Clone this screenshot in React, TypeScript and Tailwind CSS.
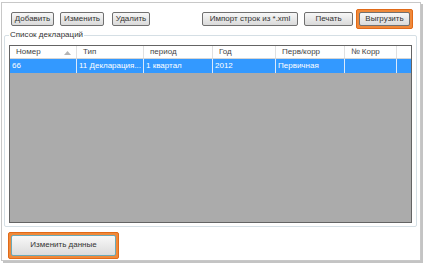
const Btn = ({
  label,
  className = '',
  highlight = false,
}: {
  label: string;
  className?: string;
  highlight?: boolean;
}) => (
  <div
    className={
      highlight
        ? 'p-[2px] bg-[#f0893a] rounded-[2px] border border-[#e06a18]'
        : ''
    }
  >
    <div
      className={`h-[14px] flex items-center justify-center border border-[#707070] rounded-[2px] bg-gradient-to-b from-[#f7f7f7] to-[#dadada] text-[8px] text-[#333] whitespace-nowrap ${className}`}
    >
      {label}
    </div>
  </div>
);

const columns = [
  { name: 'Номер', w: 'w-[67px]' },
  { name: 'Тип', w: 'w-[67px]' },
  { name: 'период', w: 'w-[69px]' },
  { name: 'Год', w: 'w-[63px]' },
  { name: 'Перв/корр', w: 'w-[69px]' },
  { name: '№ Корр', w: 'w-[52px]' },
];

const row = ['66', '11 Декларация...', '1 квартал', '2012', 'Первичная', ''];

export default function App() {
  return (
    <div
      className="w-[424px] h-[264px] bg-white pl-[1px] pt-[2px]"
      style={{ fontFamily: '"Liberation Sans", Arial, sans-serif' }}
    >
      <div className="w-[420px] h-[259px] border border-[#c8c8c8] shadow-[2px_2px_0_#c4c4c4] bg-white flex flex-col">
        {/* toolbar */}
        <div className="flex items-center h-[17px] mt-[7px] pl-[9px] pr-[7px]">
          <Btn label="Добавить" className="w-[43px]" />
          <Btn label="Изменить" className="w-[44px] ml-[6px]" />
          <Btn label="Удалить" className="w-[38px] ml-[8px]" />
          <div className="ml-auto flex items-center">
            <Btn label="Импорт строк из *.xml" className="w-[96px]" />
            <Btn label="Печать" className="w-[49px] ml-[6px]" />
            <div className="ml-[3px]">
              <Btn label="Выгрузить" highlight className="w-[51px]" />
            </div>
          </div>
        </div>

        {/* group box */}
        <div className="relative mt-[8px] ml-[2px] mr-[3px] h-[192px] border border-[#d5dfe5] rounded-[2px] px-[4px] pt-[9px] pb-[3px]">
          <span className="absolute -top-[6px] left-[4px] bg-white px-[1px] text-[8px] leading-[10px] text-[#333]">
            Список деклараций
          </span>
          <div className="h-full border border-[#646464] bg-[#ababab] flex flex-col overflow-hidden">
            <div className="flex h-[13px] bg-white border-b border-[#d5d5d5] text-[8px] text-[#444]">
              {columns.map((c, i) => (
                <div
                  key={c.name}
                  className={`${c.w} shrink-0 relative flex items-center px-[6px] border-r border-[#e0e0e0] whitespace-nowrap`}
                >
                  {c.name}
                  {i === 0 && (
                    <svg
                      className="absolute right-[5px] top-[5px]"
                      width="7"
                      height="4"
                      viewBox="0 0 7 4"
                    >
                      <path d="M0 4 L3.5 0 L7 4 Z" fill="#b4b4b4" />
                    </svg>
                  )}
                </div>
              ))}
              <div className="flex-1" />
            </div>
            <div className="flex h-[14px] bg-[#3399ff] text-[8px] text-white">
              {row.map((v, i) => (
                <div
                  key={i}
                  className={`${columns[i].w} shrink-0 flex items-center px-[2px] border-r border-[#dbeafb] whitespace-nowrap overflow-hidden`}
                >
                  {v}
                </div>
              ))}
              <div className="flex-1" />
            </div>
          </div>
        </div>

        {/* bottom */}
        <div className="mt-[3px] ml-[6px]">
          <div className="inline-block p-[2px] bg-[#f0893a] rounded-[2px] border border-[#e06a18]">
            <div className="w-[105px] h-[21px] flex items-center justify-center border border-[#6aa9b7] rounded-[2px] bg-gradient-to-b from-[#f8f8f8] to-[#dcdcdc] text-[8px] text-[#333]">
              Изменить данные
            </div>
          </div>
        </div>
      </div>
    </div>
  );
}
